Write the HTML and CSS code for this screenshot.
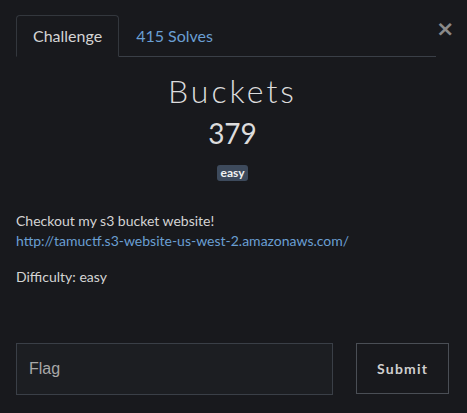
FILE: index.html
```html
<!DOCTYPE html>
<html>
<head>
<meta charset="utf-8">
<link rel="stylesheet" href="styles.css">
</head>
<body>
<div class="modal">
  <div class="header">
    <ul class="tabs">
      <li class="tab active">Challenge</li>
      <li class="tab">415 Solves</li>
    </ul>
    <button class="close" aria-label="Close">&times;</button>
  </div>
  <div class="body">
    <h2 class="name">Buckets</h2>
    <h3 class="value">379</h3>
    <div class="tags"><span class="badge">easy</span></div>
    <div class="desc">
      <p>Checkout my s3 bucket website!<br><a href="#">http://tamuctf.s3-website-us-west-2.amazonaws.com/</a></p>
      <p>Difficulty: easy</p>
    </div>
    <form class="submit-row">
      <input class="flag" type="text" placeholder="Flag">
      <button class="submit" type="button">Submit</button>
    </form>
  </div>
</div>
</body>
</html>
```
FILE: styles.css
```css
* { box-sizing: border-box; }
html, body {
  margin: 0;
  background: #18191d;
}
body {
  font-family: Lato, "Noto Sans", sans-serif;
  color: #d4d4d4;
  font-size: 14px;
  line-height: 1.5;
}
.modal {
  padding: 15px 18px 0 16px;
}
.header {
  display: flex;
  align-items: flex-start;
}
.tabs {
  list-style: none;
  margin: 0;
  padding: 0;
  display: flex;
  flex-shrink: 0;
  width: 420px;
  border-bottom: 1px solid #3a3f47;
}
.tab {
  font-size: 16px;
  line-height: 24px;
  padding: 8px 16px;
  border: 1px solid transparent;
  border-radius: 4px 4px 0 0;
  margin-bottom: -1px;
  color: #6a9fd3;
}
.tab.active {
  color: #d4d4d4;
  border-color: #33373d #33373d #18191d;
  background: #18191d;
}
.close {
  margin-left: auto;
  margin-right: 3px;
  background: none;
  border: 0;
  padding: 0;
  color: #8a8a8a;
  font-family: "DejaVu Sans", sans-serif;
  font-size: 22px;
  line-height: 24px;
  font-weight: bold;
  margin-top: 2px;
}
.body {
  padding-top: 14px;
}
.name {
  margin: 0;
  text-align: center;
  font-family: Lato, sans-serif;
  font-weight: 300;
  font-size: 32px;
  letter-spacing: 3px;
  line-height: 40px;
  color: #dcdcdc;
}
.value {
  margin: 4px 0 0;
  text-align: center;
  font-weight: 400;
  font-size: 28px;
  line-height: 36px;
  color: #dcdcdc;
}
.tags {
  text-align: center;
  margin-top: 13px;
  line-height: 16px;
}
.badge {
  display: inline-block;
  background: #3d4a5c;
  color: #f2f2f2;
  font-weight: 700;
  font-size: 12px;
  line-height: 16px;
  padding: 0 4px;
  border-radius: 3px;
}
.desc {
  margin-top: 30px;
}
.desc p {
  margin: 0 0 16px;
  line-height: 20px;
}
.desc a {
  color: #6a9fd3;
  text-decoration: none;
}
.submit-row {
  display: flex;
  align-items: flex-start;
  margin-top: 56px;
}
.flag {
  width: 318px;
  height: 52px;
  background: #1c1e22;
  border: 1px solid #3a3f47;
  color: #ccc;
  font-family: "Liberation Sans", Arial, sans-serif;
  font-size: 16px;
  padding: 0 12px;
  outline: none;
}
.flag::placeholder { color: #a8a8a8; }
.submit {
  margin-left: 23px;
  width: 93px;
  height: 51px;
  background: #18191d;
  border: 1px solid #4a4e55;
  color: #cfcfcf;
  font-family: Lato, sans-serif;
  font-weight: 700;
  font-size: 14px;
  letter-spacing: 1.2px;
}
```
